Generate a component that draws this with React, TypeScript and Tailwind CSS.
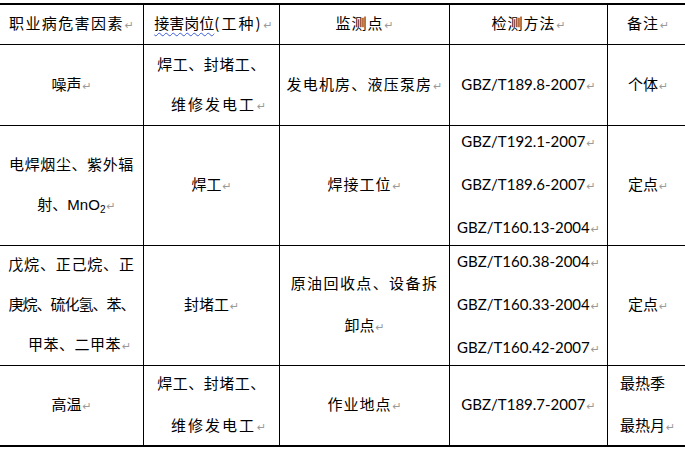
import React from "react";

const cjk = "font-['Noto_Sans_CJK_SC',sans-serif]";
const lat = "font-['Lato','Noto_Sans_CJK_SC',sans-serif]";

function Ret() {
  return (
    <span className="font-['DejaVu_Sans',sans-serif] text-[11px] text-[#9a9a9a] ml-[1px] tracking-normal">
      ↵
    </span>
  );
}

function Cell({
  children,
  left = false,
  className = "",
}: {
  children: React.ReactNode;
  left?: boolean;
  className?: string;
}) {
  return (
    <div
      className={`bg-white flex flex-col justify-center ${
        left ? "items-start pl-[12px]" : "items-center"
      } text-black ${className}`}
    >
      {children}
    </div>
  );
}

function L({
  children,
  className = "",
}: {
  children: React.ReactNode;
  className?: string;
}) {
  return (
    <div className={`whitespace-nowrap leading-[40px] text-[15px] ${cjk} ${className}`}>
      {children}
    </div>
  );
}

function G({ children, ret = true }: { children: React.ReactNode; ret?: boolean }) {
  return (
    <div className={`whitespace-nowrap leading-[40px] text-[15px] ${lat}`}>
      {children}
      {ret && <Ret />}
    </div>
  );
}

export default function App() {
  return (
    <div className="w-[685px] h-[449px] bg-white overflow-hidden pt-[3px]">
      <div className="w-[688px] bg-black border-t-2 border-b-2 border-black grid grid-cols-[143px_135px_169px_157px_80px] grid-rows-[39px_80px_119px_119px_79px] gap-px">
        {/* Header */}
        <Cell>
          <L className="tracking-[1.4px]">
            职业病危害因素
            <Ret />
          </L>
        </Cell>
        <Cell>
          <L className="pl-[4px]">
            <span className="underline decoration-wavy decoration-[#3b5bdb] underline-offset-[3px] decoration-1">
              接害岗位
            </span>
            <span className="tracking-[2px]">(工种)</span>
            <Ret />
          </L>
        </Cell>
        <Cell>
          <L className="tracking-[1px]">
            监测点
            <Ret />
          </L>
        </Cell>
        <Cell>
          <L className="tracking-[1px]">
            检测方法
            <Ret />
          </L>
        </Cell>
        <Cell>
          <L className="tracking-[1px]">
            备注
            <Ret />
          </L>
        </Cell>

        {/* Row 1 */}
        <Cell>
          <L>
            噪声
            <Ret />
          </L>
        </Cell>
        <Cell>
          <L className="tracking-[0.5px]">焊工、封堵工、</L>
          <L className="tracking-[2px] pl-[14px]">
            维修发电工
            <Ret />
          </L>
        </Cell>
        <Cell>
          <L className="tracking-[1.2px]">
            发电机房、液压泵房
            <Ret />
          </L>
        </Cell>
        <Cell>
          <G>GBZ/T189.8-2007</G>
        </Cell>
        <Cell>
          <L>
            个体
            <Ret />
          </L>
        </Cell>

        {/* Row 2 */}
        <Cell>
          <L className="tracking-[0.6px]">电焊烟尘、紫外辐</L>
          <L className="pl-[10px]">
            射、
            <span className="font-['Liberation_Sans',sans-serif]">
              MnO<sub className="text-[10px]">2</sub>
            </span>
            <Ret />
          </L>
        </Cell>
        <Cell>
          <L>
            焊工
            <Ret />
          </L>
        </Cell>
        <Cell>
          <L className="tracking-[1px]">
            焊接工位
            <Ret />
          </L>
        </Cell>
        <Cell>
          <G>GBZ/T192.1-2007</G>
          <G>GBZ/T189.6-2007</G>
          <G>GBZ/T160.13-2004</G>
        </Cell>
        <Cell>
          <L>
            定点
            <Ret />
          </L>
        </Cell>

        {/* Row 3 */}
        <Cell>
          <L className="tracking-[0.8px]">戊烷、正己烷、正</L>
          <L className="tracking-[-1px]">庚烷、硫化氢、苯、</L>
          <L className="tracking-[0.5px] pl-[16px]">
            甲苯、二甲苯
            <Ret />
          </L>
        </Cell>
        <Cell>
          <L>
            封堵工
            <Ret />
          </L>
        </Cell>
        <Cell>
          <L className="tracking-[1.4px] leading-[42px]">原油回收点、设备拆</L>
          <L className="leading-[42px]">
            卸点
            <Ret />
          </L>
        </Cell>
        <Cell>
          <G>GBZ/T160.38-2004</G>
          <G>GBZ/T160.33-2004</G>
          <G>GBZ/T160.42-2007</G>
        </Cell>
        <Cell>
          <L>
            定点
            <Ret />
          </L>
        </Cell>

        {/* Row 4 */}
        <Cell>
          <L>
            高温
            <Ret />
          </L>
        </Cell>
        <Cell>
          <L className="tracking-[0.5px] leading-[42px]">焊工、封堵工、</L>
          <L className="tracking-[2px] pl-[14px] leading-[42px]">
            维修发电工
            <Ret />
          </L>
        </Cell>
        <Cell>
          <L className="tracking-[1px]">
            作业地点
            <Ret />
          </L>
        </Cell>
        <Cell>
          <G>GBZ/T189.7-2007</G>
        </Cell>
        <Cell left>
          <L className="leading-[42px]">最热季</L>
          <L className="leading-[42px]">
            最热月
            <Ret />
          </L>
        </Cell>
      </div>
    </div>
  );
}
